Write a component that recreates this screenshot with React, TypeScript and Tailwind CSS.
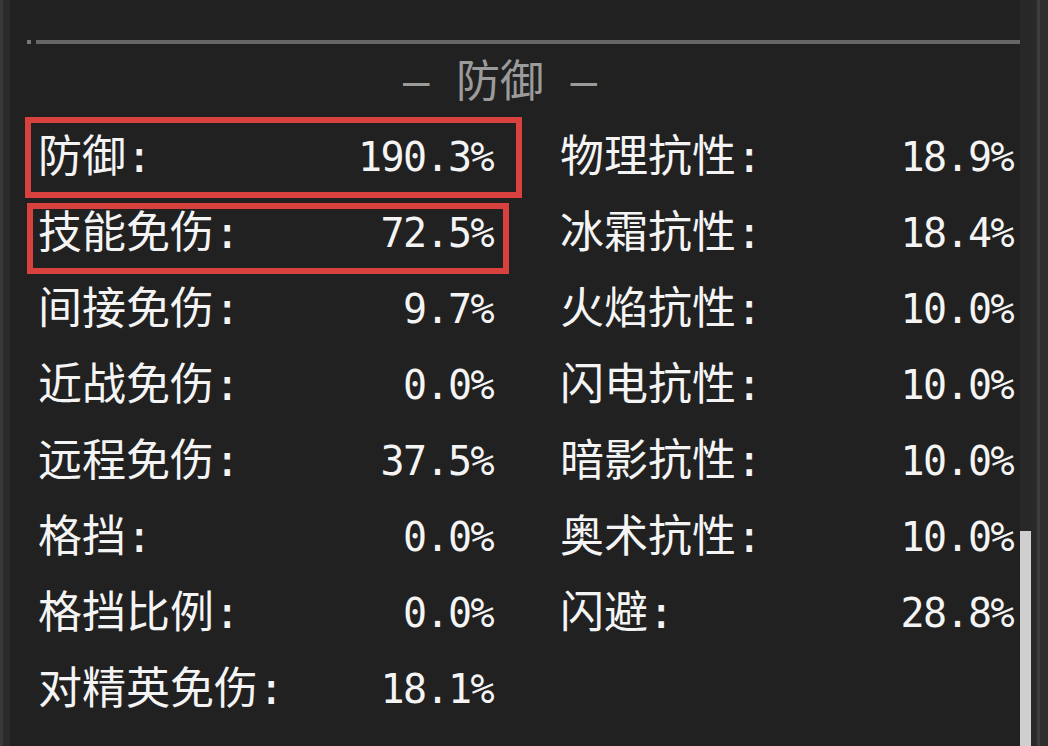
const left = [
  { label: "防御", value: "190.3%" },
  { label: "技能免伤", value: "72.5%" },
  { label: "间接免伤", value: "9.7%" },
  { label: "近战免伤", value: "0.0%" },
  { label: "远程免伤", value: "37.5%" },
  { label: "格挡", value: "0.0%" },
  { label: "格挡比例", value: "0.0%" },
  { label: "对精英免伤", value: "18.1%" },
];

const right = [
  { label: "物理抗性", value: "18.9%" },
  { label: "冰霜抗性", value: "18.4%" },
  { label: "火焰抗性", value: "10.0%" },
  { label: "闪电抗性", value: "10.0%" },
  { label: "暗影抗性", value: "10.0%" },
  { label: "奥术抗性", value: "10.0%" },
  { label: "闪避", value: "28.8%" },
];

const labelFont = {
  fontFamily: '"DejaVu Sans Mono", "Noto Sans CJK SC", monospace',
};
const valueFont = { fontFamily: '"DejaVu Sans Mono", monospace' };

function StatRow({ label, value }: { label: string; value: string }) {
  return (
    <div className="flex items-center justify-between text-[#f4f4f4]">
      <span className="text-[44px] leading-none" style={labelFont}>
        {label}:
      </span>
      <span className="text-[40px] leading-none tracking-[-1.6px]" style={valueFont}>
        {value}
      </span>
    </div>
  );
}

export default function App() {
  const rows = left.map((l, i) => [l, right[i]] as const);

  return (
    <div className="flex h-[746px] w-[1048px] overflow-hidden bg-[#212121]">
      {/* left frame edge */}
      <div className="flex w-[10px]">
        <div className="w-[3px] bg-[#3a3a3a]" />
        <div className="flex-1 bg-[#2b2b2b]" />
      </div>

      <main className="relative flex flex-1 flex-col">
        <div className="h-[40px]" />

        {/* section divider */}
        <div className="flex h-[4px] items-stretch">
          <div className="ml-[17px] w-[4px] bg-[#777777]" />
          <div className="ml-[5px] flex-1 bg-[#666666]" />
        </div>

        <div
          className="flex h-[75px] items-center justify-center whitespace-pre pr-[30px] text-[44px] leading-none text-[#9b9b9b]"
          style={labelFont}
        >
          – 防御 –
        </div>

        <div className="grid auto-rows-[76px] grid-cols-[455px_453px] gap-x-[67px] pl-[28px]">
          {rows.map(([l, r]) => (
            <div key={l.label} className="contents">
              <StatRow label={l.label} value={l.value} />
              {r ? <StatRow label={r.label} value={r.value} /> : <div />}
            </div>
          ))}
        </div>

        {/* highlight frames */}
        <div className="absolute left-[15px] top-[117px] h-[81px] w-[497px] border-[6px] border-[#d8413d]" />
        <div className="absolute left-[17px] top-[203px] h-[71px] w-[482px] border-[6px] border-[#d8413d]" />
      </main>

      {/* scrollbar + right frame edge */}
      <div className="flex w-[28px]">
        <div className="flex w-[11px] flex-col justify-end bg-[#282828]">
          <div className="h-[215px] bg-[#cfcfcf]" />
        </div>
        <div className="w-[6px] bg-[#2a2a2a]" />
        <div className="w-[3px] bg-[#3d3d3d]" />
        <div className="flex-1 bg-[#2e2e2e]" />
      </div>
    </div>
  );
}
